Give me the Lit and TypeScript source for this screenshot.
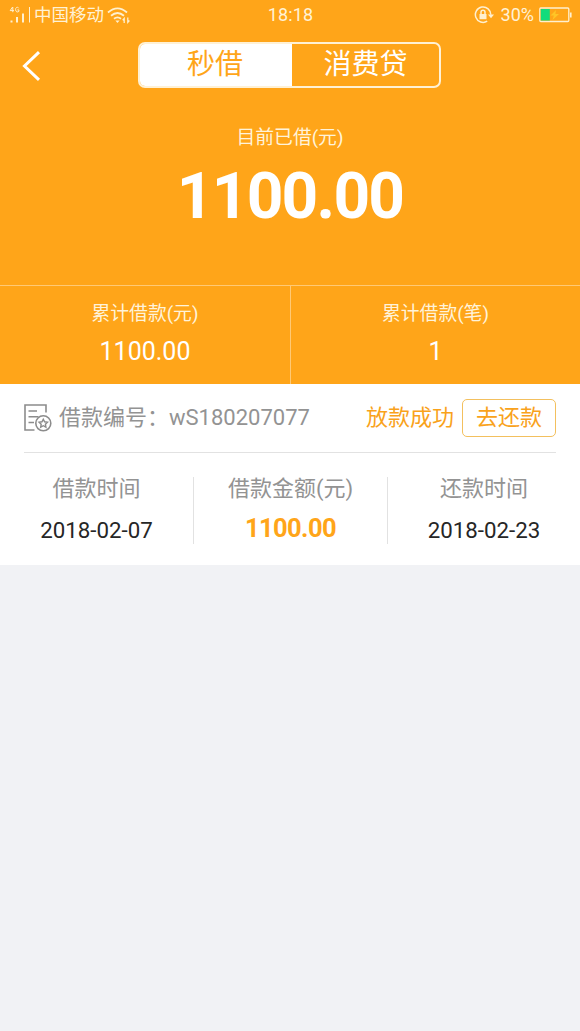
import { LitElement, html, css } from "lit";
import { customElement } from "lit/decorators.js";

@customElement("status-bar")
class StatusBar extends LitElement {
  static styles = css`
    :host { display: flex; height: 30px; color: #fff2d6; font-size: 18px; line-height: 30px; }
    .side { flex: 1; display: flex; align-items: center; }
    .left { padding-left: 9px; }
    .right { justify-content: flex-end; padding-right: 8px; }
    .carrier { font-size: 17.5px; margin: 0 3px 0 2px; }
    .time { letter-spacing: 0.1px; }
    .pct { margin: 0 5px 0 6px; }
    svg { display: block; flex: none; }
  `;
  render() {
    return html`
      <div class="side left">
        <svg width="23" height="18" viewBox="0 0 23 18" fill="none" stroke="#fff0d0">
          <path d="M3.6 1 1.2 4.6H5M3.8 1V6.2M9.8 2.2C8.8.7 6.6 1 6.6 3.6S8.8 6.5 9.9 5.4V3.9H8.4" stroke-width="1" />
          <path d="M2.5 14.5v2M8 11v5.5M14 7.5v9" stroke-width="2" />
          <path d="M20.5 1v15.5" stroke-width="1" />
        </svg>
        <span class="carrier">中国移动</span>
        <svg width="24" height="17" viewBox="0 0 24 17" fill="none" stroke="#fff0d0">
          <path d="M1 5.5Q10.5-2.8 20 5.5M4 8.8Q10.5 3.2 17 8.8M7 11.8Q10.5 9 14 11.8" stroke-width="1.8" />
          <path d="M8.4 13.5h4.2l-2.1 2.5z" fill="#fff0d0" stroke="none" />
          <path d="M17.2 16v-4.5l-1.5 1.7M20.8 10.5V15.3l1.6-1.8" stroke-width="1.3" />
        </svg>
      </div>
      <span class="time">18:18</span>
      <div class="side right">
        <svg width="21" height="18" viewBox="0 0 21 18" fill="none" stroke="#fff0d0">
          <path d="M13.2 15.2A7.7 7.7 0 1 1 16.8 8.8" stroke-width="1.5" />
          <path d="M14 8.5h6l-3 3.8z" fill="#fff0d0" stroke="none" />
          <path d="M5.5 8h7v5.2h-7z" fill="#fff0d0" stroke="none" />
          <path d="M7 8.2V6.3a2 2 0 0 1 4 0V8.2" stroke-width="1.5" />
        </svg>
        <span class="pct">30%</span>
        <svg width="33" height="16" viewBox="0 0 33 16">
          <rect x=".8" y="1" width="29" height="13.5" rx="1" fill="none" stroke="#fff0d0" stroke-width="1.3" />
          <rect x="1.8" y="2" width="9" height="11.5" fill="#12dc7c" />
          <rect x="31" y="5.5" width="1.6" height="5" fill="#fff0d0" />
          <path d="M17 3 11.5 8.5h3.3L13.5 13 20 7h-3.6z" fill="#ffc526" />
        </svg>
      </div>
    `;
  }
}

@customElement("app-root")
class AppRoot extends LitElement {
  static styles = css`
    :host {
      display: block; min-height: 1031px; background: #f1f2f5; color: #fff;
      font-family: Roboto, "Noto Sans CJK SC", sans-serif; box-sizing: border-box;
    }
    * { box-sizing: border-box; }
    .top { background: #ffa519; height: 384px; display: flex; flex-direction: column; }
    .nav { display: grid; grid-template-columns: 138px 303px 1fr; height: 59px; padding-top: 12px; }
    .back { display: block; margin: 8px 0 0 21px; }
    .tabs {
      display: grid; grid-template-columns: 152px 1fr; height: 46px; border: 2px solid #fff1d5;
      border-radius: 7px; overflow: hidden; font-size: 28px; line-height: 42px; text-align: center;
    }
    .on { background: #fff; color: #ffa519; margin: -1px 0 -1px -1px; line-height: 44px; padding-right: 1px; }
    .total { height: 196px; padding-top: 34px; text-align: center; }
    .cap { font-size: 18.8px; line-height: 30px; color: #fff3da; }
    .big { font-size: 64px; font-weight: 700; line-height: 76px; letter-spacing: -1.75px; margin-top: 6px; }
    .stats { flex: 1; display: grid; grid-template-columns: 1fr 1fr; border-top: 1px solid #ffc975; text-align: center; }
    .stat { padding-top: 13px; }
    .stat + .stat { border-left: 1px solid #ffc975; }
    .num { font-size: 25px; line-height: 36px; margin-top: 5px; }
    .card { background: #fff; height: 181px; padding: 0 24px; color: #939393; }
    .head { height: 69px; border-bottom: 1px solid #e2e2e2; display: flex; align-items: center; font-size: 22px; }
    .doc { margin-right: 7px; flex: none; }
    .id { flex: 1; line-height: 32px; }
    .state { color: #f9a21b; line-height: 32px; }
    .pay {
      width: 94px; height: 38px; margin-left: 8px; border: 1px solid #f3c05e; border-radius: 5px;
      color: #f9a21b; font: inherit; background: none; padding: 0; line-height: 34px;
    }
    .cols { display: grid; grid-template-columns: 193px 194px 193px; margin: 24px -24px 0; height: 65px; text-align: center; }
    .col + .col { border-left: 1px solid #e2e2e2; }
    .label { font-size: 22px; line-height: 24px; white-space: nowrap; }
    .date { font-size: 22.3px; line-height: 28px; margin-top: 15px; color: #262626; }
    .sum { font-size: 25.5px; font-weight: 700; line-height: 28px; margin-top: 13px; color: #ffa519; letter-spacing: -0.6px; }
  `;
  render() {
    return html`
      <div class="top">
        <status-bar></status-bar>
        <div class="nav">
          <svg class="back" width="24" height="32" viewBox="0 0 24 32" fill="none" stroke="#fff" stroke-width="3">
            <path d="M18 2.2 3.5 16 18 29.8" />
          </svg>
          <div class="tabs"><span class="on">秒借</span><span>消费贷</span></div>
        </div>
        <div class="total">
          <div class="cap">目前已借(元)</div>
          <div class="big">1100.00</div>
        </div>
        <div class="stats">
          <div class="stat"><div class="cap">累计借款(元)</div><div class="num">1100.00</div></div>
          <div class="stat"><div class="cap">累计借款(笔)</div><div class="num">1</div></div>
        </div>
      </div>
      <div class="card">
        <div class="head">
          <svg class="doc" width="28" height="28" viewBox="0 0 28 28" fill="none" stroke="#8c8c8c" stroke-width="1.6">
            <path d="M22 8.5V1H1V26H10.5M4.5 7H13M4.5 12.8H14.5M4.5 18.5H10" />
            <circle cx="19.3" cy="19.3" r="7.5" />
            <path d="m19.3 15.2 1.3 2.6 2.9.4-2.1 2 .5 2.9-2.6-1.4-2.6 1.4.5-2.9-2.1-2 2.9-.4z" stroke-width="1.4" />
          </svg>
          <span class="id">借款编号：wS180207077</span>
          <span class="state">放款成功</span>
          <button class="pay">去还款</button>
        </div>
        <div class="cols">
          <div class="col"><div class="label">借款时间</div><div class="date">2018-02-07</div></div>
          <div class="col"><div class="label">借款金额(元)</div><div class="sum">1100.00</div></div>
          <div class="col"><div class="label">还款时间</div><div class="date">2018-02-23</div></div>
        </div>
      </div>
    `;
  }
}
